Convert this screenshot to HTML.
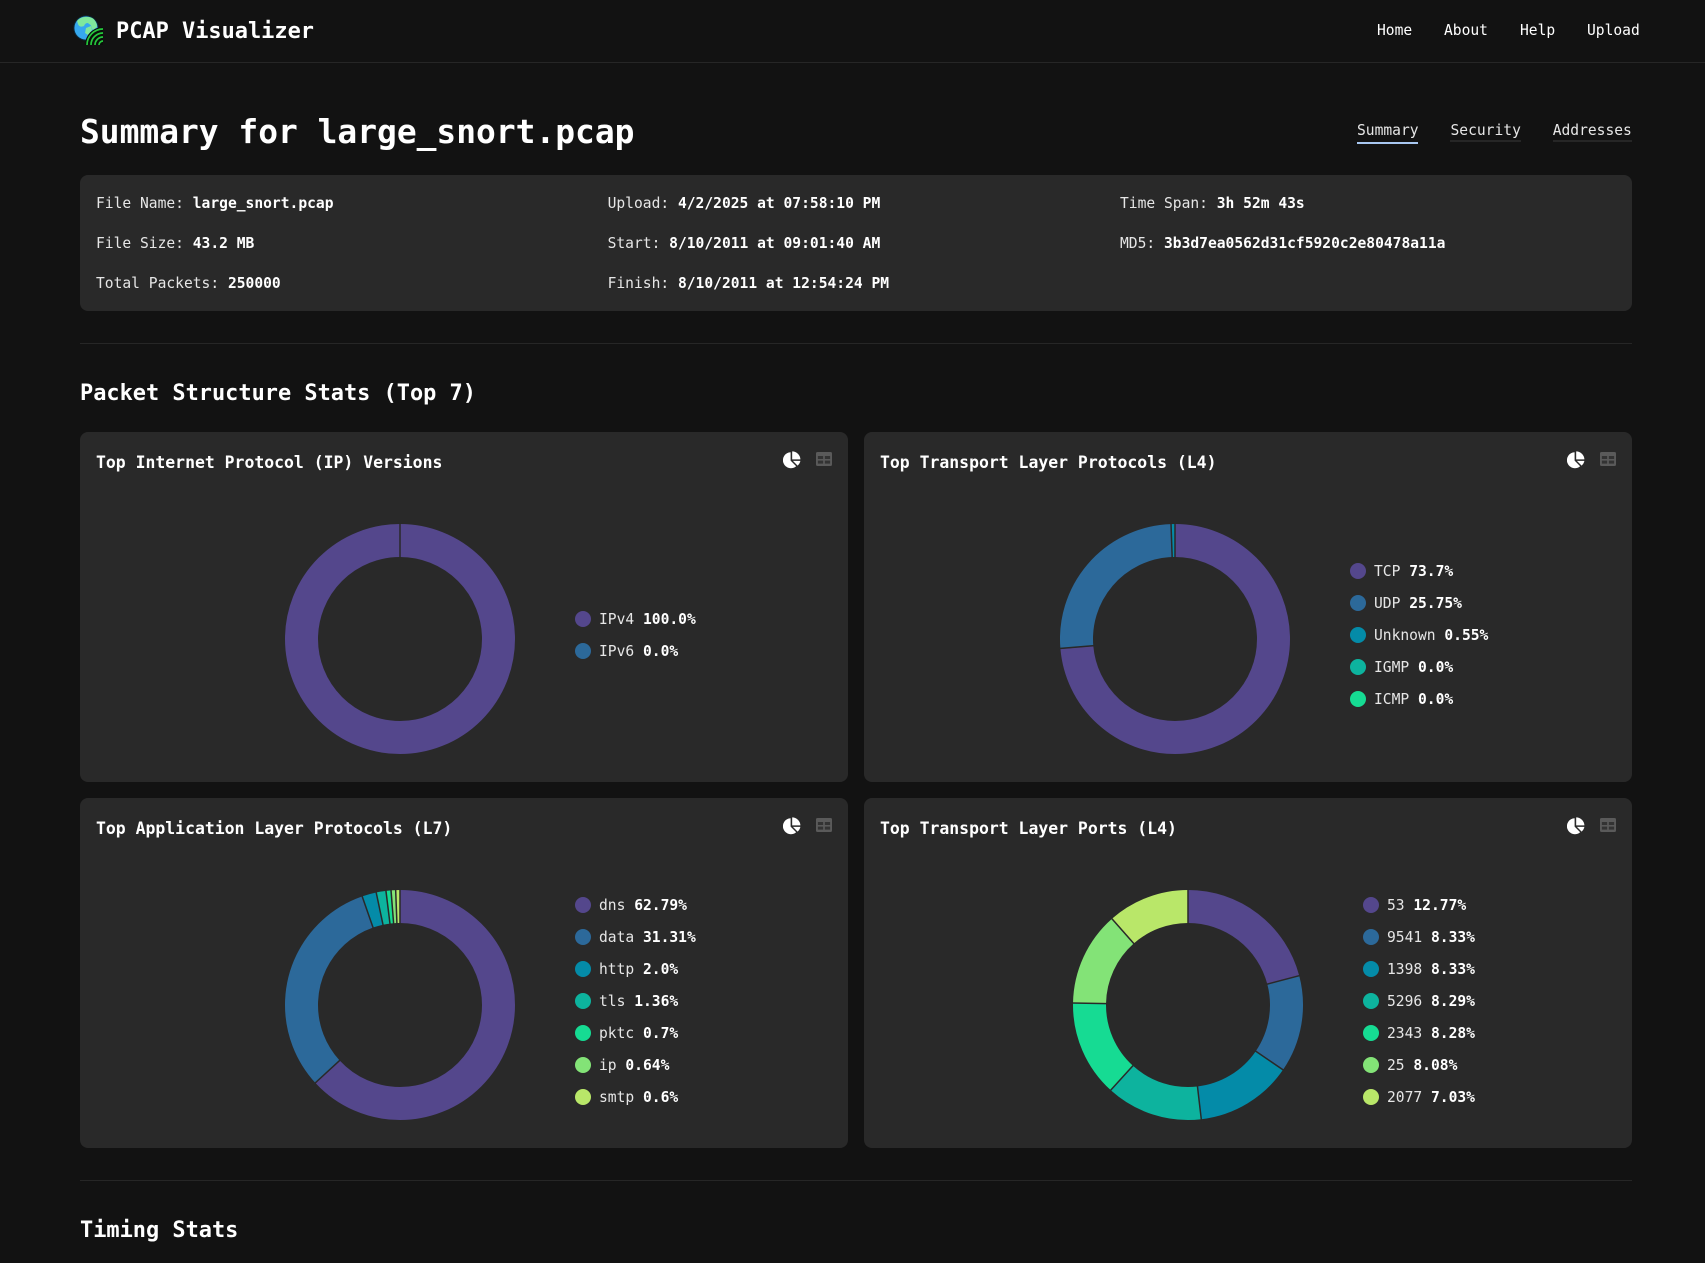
<!DOCTYPE html>
<html lang="en"><head><meta charset="utf-8"><title>PCAP Visualizer</title>
<style>
html,body{margin:0;padding:0;background:#121212}
body{width:1705px;height:1263px;overflow:hidden;position:relative;color:#e6e6e6;font-family:"DejaVu Sans Mono","Liberation Mono",monospace;font-size:14.62px}
.t{position:absolute;white-space:pre;line-height:24px;height:24px;margin-top:1px}
b{color:#fff;font-weight:700}
.box{position:absolute;background:#292929;border-radius:8px}
.hr{position:absolute;height:1px;background:#262626}
.dot{position:absolute;width:16px;height:16px;border-radius:50%}
.h2{font-size:21.93px;font-weight:700;color:#fff;line-height:32px;height:32px;margin-top:2px}
.ct{font-size:16.45px;font-weight:700;color:#fff}
svg{position:absolute;display:block}
</style></head><body>
<div class="hr" style="left:0;top:62px;width:1705px"></div>
<svg style="left:73px;top:15px" width="30" height="30" viewBox="0 0 30 30">
<circle cx="13" cy="13" r="12.6" fill="#0d2a3a"/><circle cx="13" cy="13" r="11.6" fill="#36a8ee"/>
<path d="M4 6C7 2 13 1 18 2.5C22 4 24 8 24 12L20 15C18 13 19 10 16 9C15 7 12 8 11 11C9 12 6 12 5 9Z" fill="#7fe89c"/>
<path d="M13 13L18 11L19 15L15 20L12 18Z" fill="#7fe89c"/>
<path d="M30 12A18 18 0 0 0 12 30H30Z" fill="#0a0f0a"/>
<g fill="none" stroke="#25c93c" stroke-width="1.7"><path d="M30 14A16 16 0 0 0 14 30"/><path d="M30 18A12 12 0 0 0 18 30"/><path d="M30 22A8 8 0 0 0 22 30"/><path d="M30 26A4 4 0 0 0 26 30"/></g>
</svg>
<div class="t" style="left:116px;top:18px;margin-top:2px;font-size:21.93px;font-weight:700;color:#fff">PCAP Visualizer</div>
<div class="t" style="left:1377px;top:18px;color:#fff">Home</div>
<div class="t" style="left:1444px;top:18px;color:#fff">About</div>
<div class="t" style="left:1520px;top:18px;color:#fff">Help</div>
<div class="t" style="left:1587px;top:18px;color:#fff">Upload</div>

<div class="t" style="left:80px;top:108px;margin-top:0;height:48px;line-height:48px;font-size:32.9px;font-weight:700;color:#fff">Summary for large_snort.pcap</div>
<div class="t" style="left:1357px;top:118px">Summary</div>
<div style="position:absolute;left:1357px;top:142px;width:61px;height:2px;background:#a8c7f0"></div>
<div class="t" style="left:1450.5px;top:118px">Security</div>
<div style="position:absolute;left:1450px;top:140px;width:71px;height:2px;background:#262626"></div>
<div class="t" style="left:1552.7px;top:118px">Addresses</div>
<div style="position:absolute;left:1553px;top:140px;width:79px;height:2px;background:#262626"></div>

<div class="box" style="left:80px;top:175px;width:1552px;height:136px"></div>
<div class="t" style="left:96px;top:191px">File Name: <b>large_snort.pcap</b></div>
<div class="t" style="left:96px;top:231px">File Size: <b>43.2 MB</b></div>
<div class="t" style="left:96px;top:271px">Total Packets: <b>250000</b></div>
<div class="t" style="left:607.6px;top:191px">Upload: <b>4/2/2025 at 07:58:10 PM</b></div>
<div class="t" style="left:607.6px;top:231px">Start: <b>8/10/2011 at 09:01:40 AM</b></div>
<div class="t" style="left:607.6px;top:271px">Finish: <b>8/10/2011 at 12:54:24 PM</b></div>
<div class="t" style="left:1120px;top:191px">Time Span: <b>3h 52m 43s</b></div>
<div class="t" style="left:1120px;top:231px">MD5: <b>3b3d7ea0562d31cf5920c2e80478a11a</b></div>

<div class="hr" style="left:80px;top:343px;width:1552px"></div>
<div class="t h2" style="left:80px;top:376px">Packet Structure Stats (Top 7)</div>

<div class="box" style="left:80px;top:432px;width:768px;height:350px"></div>
<div class="box" style="left:864px;top:432px;width:768px;height:350px"></div>
<div class="box" style="left:80px;top:798px;width:768px;height:350px"></div>
<div class="box" style="left:864px;top:798px;width:768px;height:350px"></div>

<div class="t ct" style="left:96px;top:450px">Top Internet Protocol (IP) Versions</div>
<div class="t ct" style="left:880px;top:450px">Top Transport Layer Protocols (L4)</div>
<div class="t ct" style="left:96px;top:816px">Top Application Layer Protocols (L7)</div>
<div class="t ct" style="left:880px;top:816px">Top Transport Layer Ports (L4)</div>

<svg width="0" height="0" style="position:absolute"><defs>
<g id="pie"><path d="M7.6 1.2A8 8 0 1 0 13.2 15.2L7.6 9.6Z" fill="#fff"/><path d="M9.2 0.4A8.4 8.4 0 0 1 17.4 8.4H9.2Z" fill="#fff"/><path d="M17.4 9.9A8.2 8.2 0 0 1 14.6 14.6L9.9 9.9Z" fill="#fff"/></g>
<g id="tbl"><rect x="0" y="0" width="17" height="14" rx="1.6" fill="#5a5a5a"/><rect x="2" y="4" width="5.6" height="3" fill="#333"/><rect x="9.4" y="4" width="5.6" height="3" fill="#333"/><rect x="2" y="8.6" width="5.6" height="3" fill="#333"/><rect x="9.4" y="8.6" width="5.6" height="3" fill="#333"/></g>
</defs></svg>
<svg style="left:783px;top:451px" width="18" height="18"><use href="#pie"/></svg>
<svg style="left:816px;top:452px" width="16" height="14" viewBox="0 0 17 14" preserveAspectRatio="none"><use href="#tbl"/></svg>
<svg style="left:1567px;top:451px" width="18" height="18"><use href="#pie"/></svg>
<svg style="left:1600px;top:452px" width="16" height="14" viewBox="0 0 17 14" preserveAspectRatio="none"><use href="#tbl"/></svg>
<svg style="left:783px;top:817px" width="18" height="18"><use href="#pie"/></svg>
<svg style="left:816px;top:818px" width="16" height="14" viewBox="0 0 17 14" preserveAspectRatio="none"><use href="#tbl"/></svg>
<svg style="left:1567px;top:817px" width="18" height="18"><use href="#pie"/></svg>
<svg style="left:1600px;top:818px" width="16" height="14" viewBox="0 0 17 14" preserveAspectRatio="none"><use href="#tbl"/></svg>

<!-- Chart 1 -->
<svg style="left:275px;top:514px" width="250" height="250" viewBox="-125 -125 250 250" fill="none">
<circle r="98.5" stroke="#54478c" stroke-width="33"/>
<line y1="-81" y2="-116" stroke="#292929" stroke-width="1.5"/>
</svg>
<div class="dot" style="left:575px;top:611px;background:#54478c"></div><div class="t" style="left:599px;top:607px">IPv4 <b>100.0%</b></div>
<div class="dot" style="left:575px;top:643px;background:#2c699a"></div><div class="t" style="left:599px;top:639px">IPv6 <b>0.0%</b></div>

<!-- Chart 2 -->
<svg style="left:1050px;top:514px" width="250" height="250" viewBox="-125 -125 250 250" fill="none">
<g stroke-width="33" transform="rotate(-90)">
<circle r="98.5" pathLength="360" stroke="#54478c" stroke-dasharray="265.32 360"/>
<circle r="98.5" pathLength="360" stroke="#2c699a" stroke-dasharray="92.7 360" transform="rotate(265.32)"/>
<circle r="98.5" pathLength="360" stroke="#048ba8" stroke-dasharray="1.98 360" transform="rotate(358.02)"/>
</g>
<g stroke="#292929" stroke-width="1.5">
<line y1="-81" y2="-116"/><line y1="-81" y2="-116" transform="rotate(265.32)"/><line y1="-81" y2="-116" transform="rotate(358.02)"/>
</g>
</svg>
<div class="dot" style="left:1350px;top:563px;background:#54478c"></div><div class="t" style="left:1374px;top:559px">TCP <b>73.7%</b></div>
<div class="dot" style="left:1350px;top:595px;background:#2c699a"></div><div class="t" style="left:1374px;top:591px">UDP <b>25.75%</b></div>
<div class="dot" style="left:1350px;top:627px;background:#048ba8"></div><div class="t" style="left:1374px;top:623px">Unknown <b>0.55%</b></div>
<div class="dot" style="left:1350px;top:659px;background:#0db39e"></div><div class="t" style="left:1374px;top:655px">IGMP <b>0.0%</b></div>
<div class="dot" style="left:1350px;top:691px;background:#16db93"></div><div class="t" style="left:1374px;top:687px">ICMP <b>0.0%</b></div>

<!-- Chart 3 -->
<svg style="left:275px;top:880px" width="250" height="250" viewBox="-125 -125 250 250" fill="none">
<g stroke-width="33" transform="rotate(-90)">
<circle r="98.5" pathLength="360" stroke="#54478c" stroke-dasharray="227.41 360"/>
<circle r="98.5" pathLength="360" stroke="#2c699a" stroke-dasharray="113.4 360" transform="rotate(227.41)"/>
<circle r="98.5" pathLength="360" stroke="#048ba8" stroke-dasharray="7.24 360" transform="rotate(340.81)"/>
<circle r="98.5" pathLength="360" stroke="#0db39e" stroke-dasharray="4.93 360" transform="rotate(348.05)"/>
<circle r="98.5" pathLength="360" stroke="#16db93" stroke-dasharray="2.54 360" transform="rotate(352.98)"/>
<circle r="98.5" pathLength="360" stroke="#83e377" stroke-dasharray="2.32 360" transform="rotate(355.52)"/>
<circle r="98.5" pathLength="360" stroke="#b9e769" stroke-dasharray="2.17 360" transform="rotate(357.84)"/>
</g>
<g stroke="#292929" stroke-width="1.5">
<line y1="-81" y2="-116"/><line y1="-81" y2="-116" transform="rotate(227.41)"/><line y1="-81" y2="-116" transform="rotate(340.81)"/><line y1="-81" y2="-116" transform="rotate(348.05)"/><line y1="-81" y2="-116" transform="rotate(352.98)"/><line y1="-81" y2="-116" transform="rotate(355.52)"/><line y1="-81" y2="-116" transform="rotate(357.84)"/>
</g>
</svg>
<div class="dot" style="left:575px;top:897px;background:#54478c"></div><div class="t" style="left:599px;top:893px">dns <b>62.79%</b></div>
<div class="dot" style="left:575px;top:929px;background:#2c699a"></div><div class="t" style="left:599px;top:925px">data <b>31.31%</b></div>
<div class="dot" style="left:575px;top:961px;background:#048ba8"></div><div class="t" style="left:599px;top:957px">http <b>2.0%</b></div>
<div class="dot" style="left:575px;top:993px;background:#0db39e"></div><div class="t" style="left:599px;top:989px">tls <b>1.36%</b></div>
<div class="dot" style="left:575px;top:1025px;background:#16db93"></div><div class="t" style="left:599px;top:1021px">pktc <b>0.7%</b></div>
<div class="dot" style="left:575px;top:1057px;background:#83e377"></div><div class="t" style="left:599px;top:1053px">ip <b>0.64%</b></div>
<div class="dot" style="left:575px;top:1089px;background:#b9e769"></div><div class="t" style="left:599px;top:1085px">smtp <b>0.6%</b></div>

<!-- Chart 4 -->
<svg style="left:1063px;top:880px" width="250" height="250" viewBox="-125 -125 250 250" fill="none">
<g stroke-width="33" transform="rotate(-90)">
<circle r="98.5" pathLength="360" stroke="#54478c" stroke-dasharray="75.23 360"/>
<circle r="98.5" pathLength="360" stroke="#2c699a" stroke-dasharray="49.07 360" transform="rotate(75.23)"/>
<circle r="98.5" pathLength="360" stroke="#048ba8" stroke-dasharray="49.07 360" transform="rotate(124.3)"/>
<circle r="98.5" pathLength="360" stroke="#0db39e" stroke-dasharray="48.84 360" transform="rotate(173.37)"/>
<circle r="98.5" pathLength="360" stroke="#16db93" stroke-dasharray="48.78 360" transform="rotate(222.21)"/>
<circle r="98.5" pathLength="360" stroke="#83e377" stroke-dasharray="47.6 360" transform="rotate(270.99)"/>
<circle r="98.5" pathLength="360" stroke="#b9e769" stroke-dasharray="41.41 360" transform="rotate(318.59)"/>
</g>
<g stroke="#292929" stroke-width="1.5">
<line y1="-81" y2="-116"/><line y1="-81" y2="-116" transform="rotate(75.23)"/><line y1="-81" y2="-116" transform="rotate(124.3)"/><line y1="-81" y2="-116" transform="rotate(173.37)"/><line y1="-81" y2="-116" transform="rotate(222.21)"/><line y1="-81" y2="-116" transform="rotate(270.99)"/><line y1="-81" y2="-116" transform="rotate(318.59)"/>
</g>
</svg>
<div class="dot" style="left:1363px;top:897px;background:#54478c"></div><div class="t" style="left:1387px;top:893px">53 <b>12.77%</b></div>
<div class="dot" style="left:1363px;top:929px;background:#2c699a"></div><div class="t" style="left:1387px;top:925px">9541 <b>8.33%</b></div>
<div class="dot" style="left:1363px;top:961px;background:#048ba8"></div><div class="t" style="left:1387px;top:957px">1398 <b>8.33%</b></div>
<div class="dot" style="left:1363px;top:993px;background:#0db39e"></div><div class="t" style="left:1387px;top:989px">5296 <b>8.29%</b></div>
<div class="dot" style="left:1363px;top:1025px;background:#16db93"></div><div class="t" style="left:1387px;top:1021px">2343 <b>8.28%</b></div>
<div class="dot" style="left:1363px;top:1057px;background:#83e377"></div><div class="t" style="left:1387px;top:1053px">25 <b>8.08%</b></div>
<div class="dot" style="left:1363px;top:1089px;background:#b9e769"></div><div class="t" style="left:1387px;top:1085px">2077 <b>7.03%</b></div>

<div class="hr" style="left:80px;top:1180px;width:1552px"></div>
<div class="t h2" style="left:80px;top:1213px">Timing Stats</div>
</body></html>
